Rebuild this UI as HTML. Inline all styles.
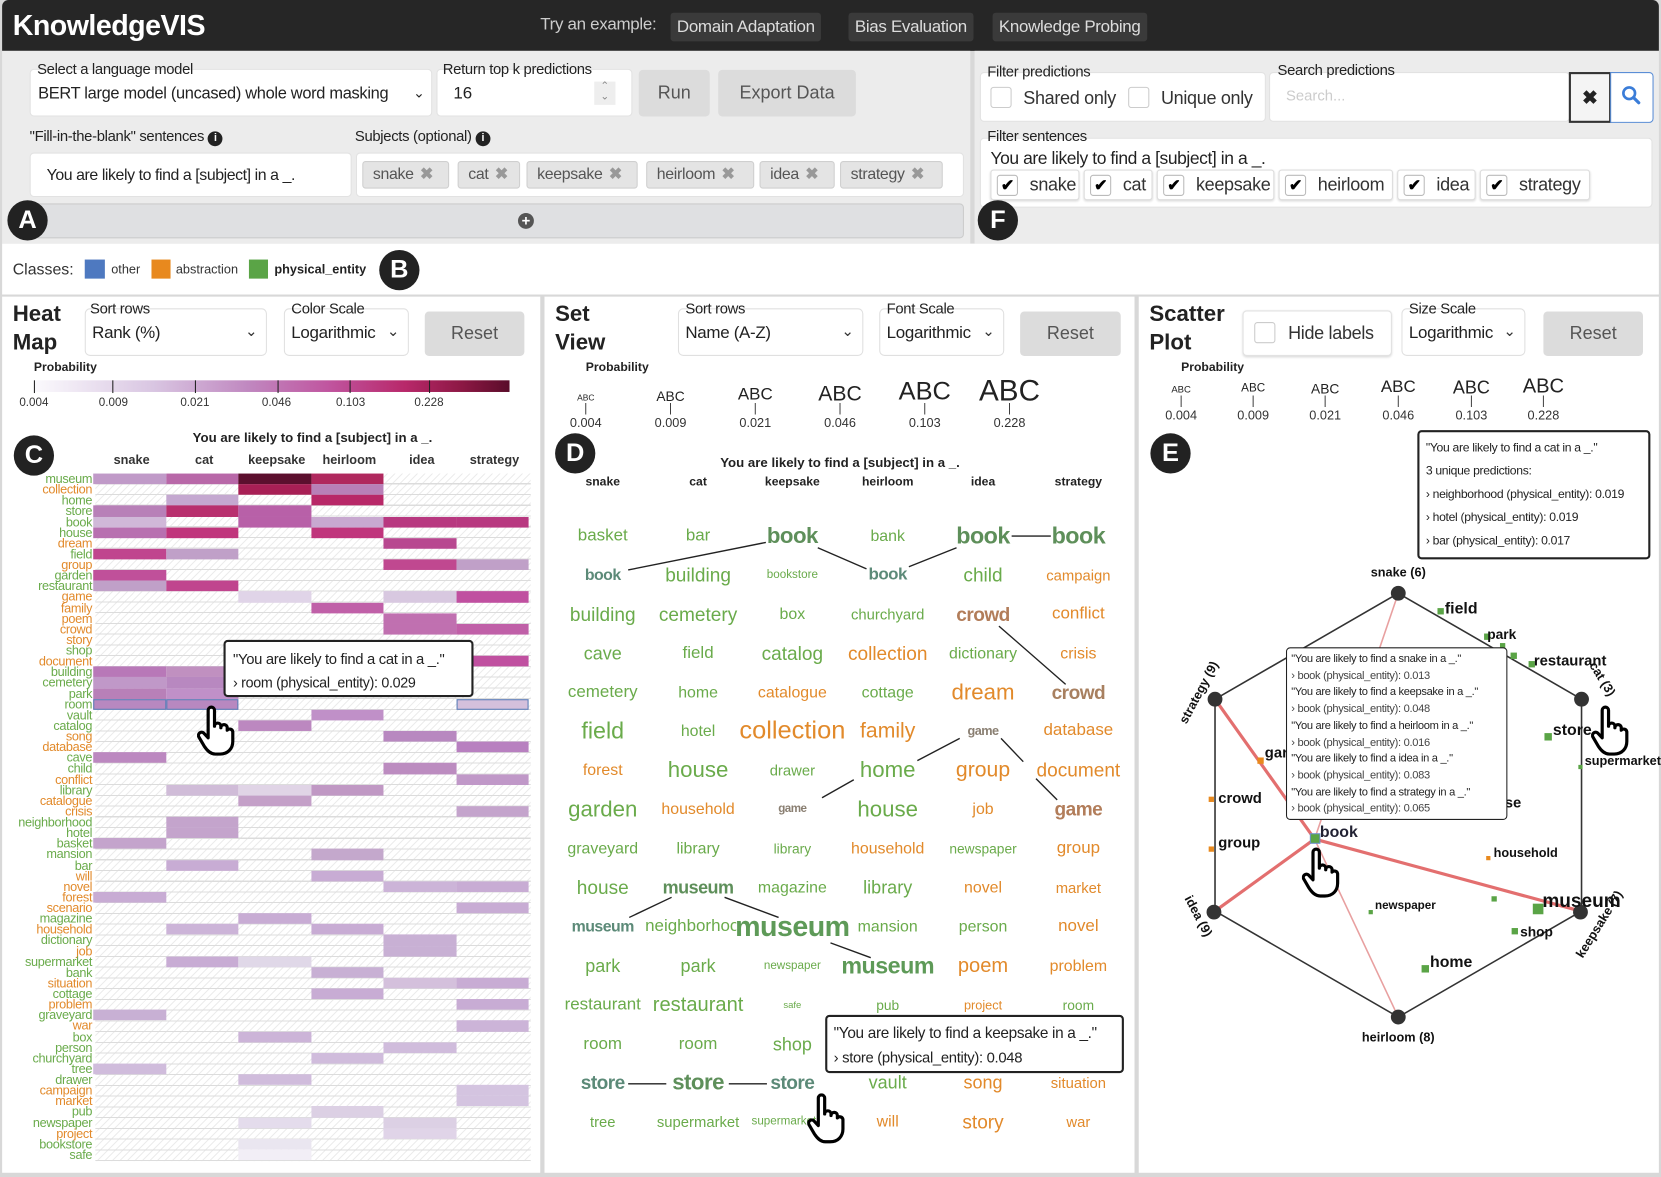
<!DOCTYPE html>
<html><head><meta charset="utf-8">
<style>
*{box-sizing:border-box;margin:0;padding:0}
html,body{width:1661px;height:1177px;overflow:hidden;background:#fff;font-family:"Liberation Sans",sans-serif;color:#222}
#w{position:absolute;left:0;top:0;width:1568px;height:1111px;transform:scale(1.0593,1.0594);transform-origin:0 0;background:#d8d8d8}
.a{position:absolute}
.top{left:2px;top:0;width:1564px;height:48px;background:#262626;border-radius:6px 6px 0 0}
.ex{position:absolute;top:12px;height:27px;background:#3a3a3a;color:#ddd;font-size:16px;line-height:27px;padding:0 6px;border-radius:3px;letter-spacing:-0.3px}
.lbl{position:absolute;font-size:14px;color:#222;letter-spacing:-0.3px}
.box{position:absolute;background:#fff;border:1px solid #e2e2e2;border-radius:4px}
.btn{position:absolute;background:#dcdcdc;color:#555;font-size:17px;text-align:center;border-radius:4px}
.chip{position:absolute;top:152px;height:26px;background:#e4e4e4;border:1px solid #cfcfcf;border-radius:3px;font-size:15px;line-height:24px;color:#555;padding-left:9px;letter-spacing:-0.3px}
.chip i{font-style:normal;color:#999;margin-left:6px;font-weight:bold}
.badge{position:absolute;width:38px;height:38px;border-radius:50%;background:#222;color:#fff;font-weight:bold;font-size:24px;text-align:center;line-height:38px}
.cb{position:absolute;width:20px;height:20px;border:1px solid #ccc;border-radius:3px;background:#fff}
.fchip{position:absolute;top:160px;height:29px;background:#fff;border:1px solid #ddd;border-radius:3px;font-size:17px;line-height:28px;color:#333;box-shadow:0 1px 2px #ddd;letter-spacing:-0.3px}
.fchip b{position:absolute;left:5px;top:4px;width:20px;height:20px;border:1px solid #bbb;border-radius:3px;font-size:15px;line-height:19px;text-align:center;color:#000}
.panel{position:absolute;background:#fff;top:280px;height:827px}
.ptitle{position:absolute;font-weight:bold;font-size:21px;line-height:27px;color:#222}
.sel{position:absolute;background:#fff;border:1px solid #e0e0e0;border-radius:5px}
.sel span{position:absolute;left:6px;top:14px;font-size:16px;color:#222;letter-spacing:-0.3px}
.sel em{position:absolute;right:8px;top:12px;font-style:normal;font-size:14px;color:#333}
.sl{position:absolute;font-size:14px;color:#222;letter-spacing:-0.3px}
.prob{position:absolute;font-weight:bold;font-size:11.5px;color:#222}
.tk{position:absolute;font-size:11px;color:#333;text-align:center;width:50px;margin-left:-25px}
.hm{position:absolute;left:0;top:447px;width:501px}
.r{display:flex;height:10.14px}
.r b{display:block;width:88px;font-weight:normal;font-size:12px;line-height:10px;text-align:right;padding-right:1px;white-space:nowrap;letter-spacing:-0.3px}
.r i{display:block;width:68.5px;height:10.14px}
.g{color:#6aab4b}.o{color:#e28a2b}
.grid{position:absolute;left:90px;top:447px;width:411px;height:649px;background:repeating-linear-gradient(180deg,transparent 0 9.14px,#dcdcdc 9.14px 10.14px),repeating-linear-gradient(-45deg,#fff 0 4px,#ececec 4px 5px)}
.w{position:absolute;transform:translate(-50%,-50%);white-space:nowrap;line-height:1}
.wb{font-weight:bold;letter-spacing:-0.5px}
.tt{position:absolute;background:#fff;border:2px solid #222;border-radius:4px;color:#222;white-space:nowrap;overflow:hidden;letter-spacing:-0.3px}
svg text{font-family:"Liberation Sans",sans-serif}
</style></head><body><div id="w">
<div class="a top"></div>
<div class="a" style="left:12px;top:9px;font-size:27px;font-weight:bold;color:#fff;letter-spacing:-0.5px">KnowledgeVIS</div>
<div class="a" style="left:510px;top:15px;font-size:16px;color:#ccc;letter-spacing:-0.3px">Try an example:</div>
<div class="ex" style="left:633px">Domain Adaptation</div>
<div class="ex" style="left:801px">Bias Evaluation</div>
<div class="ex" style="left:937px">Knowledge Probing</div>
<div class="a" style="left:2px;top:48px;width:914px;height:182px;background:#ececec"></div>
<div class="a" style="left:920px;top:48px;width:646px;height:182px;background:#ececec"></div>
<div class="a" style="left:2px;top:230px;width:1564px;height:48px;background:#fff"></div>
<div class="box" style="left:28px;top:65px;width:380px;height:45px"></div>
<div class="lbl" style="left:35px;top:57px">Select a language model</div>
<div class="a" style="left:36px;top:80px;font-size:15.5px;letter-spacing:-0.3px">BERT large model (uncased) whole word masking</div>
<div class="a" style="left:390px;top:80px;font-size:13px">&#8964;</div>
<div class="box" style="left:412px;top:65px;width:185px;height:45px"></div>
<div class="lbl" style="left:418px;top:57px">Return top k predictions</div>
<div class="a" style="left:428px;top:80px;font-size:16px">16</div>
<div class="a" style="left:561px;top:77px;width:20px;height:22px;background:#eee;font-size:10px;color:#888;text-align:center;line-height:10px">&#8963;<br>&#8964;</div>
<div class="btn" style="left:603px;top:66px;width:67px;height:44px;line-height:44px">Run</div>
<div class="btn" style="left:678px;top:66px;width:130px;height:44px;line-height:44px">Export Data</div>
<div class="lbl" style="left:28px;top:120px">"Fill-in-the-blank" sentences <span style="display:inline-block;width:14px;height:14px;border-radius:50%;background:#222;color:#fff;font-size:10px;text-align:center;line-height:14px;font-weight:bold">i</span></div>
<div class="lbl" style="left:335px;top:120px">Subjects (optional) <span style="display:inline-block;width:14px;height:14px;border-radius:50%;background:#222;color:#fff;font-size:10px;text-align:center;line-height:14px;font-weight:bold">i</span></div>
<div class="box" style="left:28px;top:144px;width:304px;height:42px"></div>
<div class="a" style="left:44px;top:157px;font-size:15px;letter-spacing:-0.4px">You are likely to find a [subject] in a _.</div>
<div class="box" style="left:336px;top:144px;width:574px;height:42px"></div>
<div class="chip" style="left:342px;width:82px">snake<i>✖</i></div>
<div class="chip" style="left:432px;width:59px">cat<i>✖</i></div>
<div class="chip" style="left:497px;width:105px">keepsake<i>✖</i></div>
<div class="chip" style="left:610px;width:102px">heirloom<i>✖</i></div>
<div class="chip" style="left:717px;width:71px">idea<i>✖</i></div>
<div class="chip" style="left:793px;width:97px">strategy<i>✖</i></div>
<div class="a" style="left:30px;top:192px;width:880px;height:33px;background:#dfe0e2;border:1px solid #ccc;border-radius:4px"></div>
<div class="a" style="left:489px;top:201px;width:15px;height:15px;border-radius:50%;background:#555;color:#fff;font-size:14px;line-height:15px;text-align:center;font-weight:bold">+</div>
<div class="badge" style="left:7px;top:189px">A</div>
<div class="box" style="left:925px;top:68px;width:270px;height:47px"></div>
<div class="lbl" style="left:932px;top:59px">Filter predictions</div>
<div class="cb" style="left:935px;top:82px"></div>
<div class="a" style="left:966px;top:83px;font-size:17px;color:#333;letter-spacing:-0.3px">Shared only</div>
<div class="cb" style="left:1065px;top:82px"></div>
<div class="a" style="left:1096px;top:83px;font-size:17px;color:#333;letter-spacing:-0.3px">Unique only</div>
<div class="box" style="left:1198px;top:68px;width:284px;height:47px"></div>
<div class="lbl" style="left:1206px;top:58px">Search predictions</div>
<div class="a" style="left:1214px;top:82px;font-size:14px;color:#ccc">Search...</div>
<div class="a" style="left:1481px;top:68px;width:40px;height:48px;border:2px solid #333;background:#f4f4f4;text-align:center;line-height:44px;font-size:18px;font-weight:bold">✖</div>
<div class="a" style="left:1520px;top:68px;width:41px;height:48px;border:1px solid #5b8ed6;background:#fff;border-radius:0 4px 4px 0"></div>
<svg class="a" style="left:1530px;top:80px" width="20" height="20" viewBox="0 0 20 20"><circle cx="8" cy="8" r="5.5" fill="none" stroke="#3b7dd8" stroke-width="2.5"/><line x1="12" y1="12" x2="17" y2="17" stroke="#3b7dd8" stroke-width="3" stroke-linecap="round"/></svg>
<div class="box" style="left:925px;top:130px;width:635px;height:66px"></div>
<div class="lbl" style="left:932px;top:120px">Filter sentences</div>
<div class="a" style="left:935px;top:141px;font-size:16.5px;color:#222;letter-spacing:-0.4px">You are likely to find a [subject] in a _.</div>
<div class="fchip" style="left:935px;width:84px"><b>✔</b><span style="margin-left:36px">snake</span></div>
<div class="fchip" style="left:1023px;width:65px"><b>✔</b><span style="margin-left:36px">cat</span></div>
<div class="fchip" style="left:1092px;width:111px"><b>✔</b><span style="margin-left:36px">keepsake</span></div>
<div class="fchip" style="left:1207px;width:108px"><b>✔</b><span style="margin-left:36px">heirloom</span></div>
<div class="fchip" style="left:1319px;width:74px"><b>✔</b><span style="margin-left:36px">idea</span></div>
<div class="fchip" style="left:1397px;width:104px"><b>✔</b><span style="margin-left:36px">strategy</span></div>
<div class="badge" style="left:923px;top:189px">F</div>
<div class="a" style="left:12px;top:246px;font-size:15px;color:#333">Classes:</div>
<div class="a" style="left:80px;top:245px;width:19px;height:18px;background:#4e79c0"></div>
<div class="a" style="left:105px;top:247px;font-size:12px;color:#333">other</div>
<div class="a" style="left:143px;top:245px;width:18px;height:18px;background:#e8891e"></div>
<div class="a" style="left:166px;top:247px;font-size:12px;color:#333">abstraction</div>
<div class="a" style="left:235px;top:245px;width:18px;height:18px;background:#5aa446"></div>
<div class="a" style="left:259px;top:247px;font-size:12px;color:#222;font-weight:bold">physical_entity</div>
<div class="badge" style="left:358px;top:236px">B</div>

<div class="panel" style="left:2px;width:508px"></div>
<div class="ptitle" style="left:12px;top:283px">Heat<br>Map</div>
<div class="sel" style="left:80px;top:291px;width:172px;height:45px"><span>Rank (%)</span><em>&#8964;</em></div>
<div class="sl" style="left:85px;top:283px">Sort rows</div>
<div class="sel" style="left:268px;top:291px;width:118px;height:45px"><span>Logarithmic</span><em>&#8964;</em></div>
<div class="sl" style="left:275px;top:283px">Color Scale</div>
<div class="btn" style="left:401px;top:294px;width:94px;height:42px;line-height:42px">Reset</div>
<div class="prob" style="left:32px;top:341px">Probability</div>
<div class="a" style="left:32px;top:359px;width:449px;height:11px;background:linear-gradient(90deg,#fbfafd 0%,#d9c6e2 25%,#c088c0 45%,#c0559f 62%,#b8286a 78%,#8c1844 90%,#5a0c2a 100%)"></div>
<div class="a" style="left:32px;top:359px;width:1px;height:12px;background:#222"></div>
<div class="a" style="left:106px;top:359px;width:1px;height:12px;background:#222"></div>
<div class="a" style="left:184px;top:359px;width:1px;height:12px;background:#222"></div>
<div class="a" style="left:262px;top:359px;width:1px;height:12px;background:#222"></div>
<div class="a" style="left:330px;top:359px;width:1px;height:12px;background:#222"></div>
<div class="a" style="left:405px;top:359px;width:1px;height:12px;background:#222"></div>
<div class="tk" style="left:32px;top:374px">0.004</div><div class="tk" style="left:107px;top:374px">0.009</div><div class="tk" style="left:184px;top:374px">0.021</div><div class="tk" style="left:261px;top:374px">0.046</div><div class="tk" style="left:331px;top:374px">0.103</div><div class="tk" style="left:405px;top:374px">0.228</div>
<div class="badge" style="left:13px;top:411px">C</div>
<div class="a" style="left:120px;top:406px;width:350px;text-align:center;font-size:12.5px;font-weight:bold">You are likely to find a [subject] in a _.</div>
<div class="a" style="left:90px;top:427px;width:411px;display:flex;font-size:12px;font-weight:bold;color:#333"><span style="width:68.5px;text-align:center">snake</span><span style="width:68.5px;text-align:center">cat</span><span style="width:68.5px;text-align:center">keepsake</span><span style="width:68.5px;text-align:center">heirloom</span><span style="width:68.5px;text-align:center">idea</span><span style="width:68.5px;text-align:center">strategy</span></div>
<div class="grid"></div>
<div class="hm">
<div class="r"><b class="g">museum</b><i style="background:#c09ac8"></i><i style="background:#b868a8"></i><i style="background:#5c0f2e"></i><i style="background:#b0285e"></i></div>
<div class="r"><b class="o">collection</b><i></i><i></i><i style="background:#a81f55"></i><i style="background:#b880b8"></i></div>
<div class="r"><b class="g">home</b><i></i><i style="background:#c4a8d0"></i><i></i><i style="background:#b82868"></i></div>
<div class="r"><b class="g">store</b><i style="background:#b880b8"></i><i style="background:#b8306e"></i><i style="background:#b860a8"></i></div>
<div class="r"><b class="g">book</b><i style="background:#d0b8d8"></i><i></i><i style="background:#b860a8"></i><i style="background:#c8a8d0"></i><i style="background:#b83880"></i><i style="background:#b83880"></i></div>
<div class="r"><b class="g">house</b><i style="background:#b870b0"></i><i style="background:#c0357c"></i><i></i><i style="background:#c0357c"></i></div>
<div class="r"><b class="o">dream</b><i></i><i></i><i></i><i></i><i style="background:#b84890"></i></div>
<div class="r"><b class="g">field</b><i style="background:#c0458e"></i><i style="background:#c0a0c8"></i></div>
<div class="r"><b class="o">group</b><i></i><i></i><i></i><i></i><i style="background:#c04890"></i><i style="background:#c0a0c8"></i></div>
<div class="r"><b class="g">garden</b><i style="background:#c0509a"></i></div>
<div class="r"><b class="g">restaurant</b><i style="background:#c0a0c8"></i><i style="background:#c0458e"></i></div>
<div class="r"><b class="o">game</b><i></i><i></i><i style="background:#e0d4e8"></i><i></i><i style="background:#d8c8e0"></i><i style="background:#c050a0"></i></div>
<div class="r"><b class="o">family</b><i></i><i></i><i></i><i style="background:#c060a8"></i></div>
<div class="r"><b class="o">poem</b><i></i><i></i><i></i><i></i><i style="background:#c070b0"></i></div>
<div class="r"><b class="o">crowd</b><i></i><i></i><i></i><i></i><i style="background:#c070b0"></i><i style="background:#c060a8"></i></div>
<div class="r"><b class="o">story</b></div>
<div class="r"><b class="g">shop</b></div>
<div class="r"><b class="o">document</b><i></i><i></i><i></i><i></i><i></i><i style="background:#c050a0"></i></div>
<div class="r"><b class="g">building</b><i style="background:#b878b8"></i><i style="background:#c090c0"></i></div>
<div class="r"><b class="g">cemetery</b><i style="background:#c098c8"></i><i style="background:#b888c0"></i></div>
<div class="r"><b class="g">park</b><i style="background:#b880b8"></i><i style="background:#c090c8"></i></div>
<div class="r"><b class="g">room</b><i style="background:#b888c0;outline:1px solid #5b7fb8;outline-offset:-1px"></i><i style="background:#b888c0;outline:1px solid #5b7fb8;outline-offset:-1px"></i><i></i><i></i><i></i><i style="background:#d4c0dc;outline:1px solid #5b7fb8;outline-offset:-1px"></i></div>
<div class="r"><b class="g">vault</b><i></i><i></i><i></i><i style="background:#c090c8"></i></div>
<div class="r"><b class="g">catalog</b><i></i><i></i><i style="background:#bc88c0"></i></div>
<div class="r"><b class="o">song</b><i></i><i></i><i></i><i></i><i style="background:#b888c0"></i></div>
<div class="r"><b class="o">database</b><i></i><i></i><i></i><i></i><i></i><i style="background:#b880c0"></i></div>
<div class="r"><b class="g">cave</b><i style="background:#bc88c0"></i></div>
<div class="r"><b class="g">child</b><i></i><i></i><i></i><i></i><i style="background:#bc8cc0"></i></div>
<div class="r"><b class="o">conflict</b><i></i><i></i><i></i><i></i><i></i><i style="background:#c098c8"></i></div>
<div class="r"><b class="g">library</b><i></i><i style="background:#d0bcd8"></i><i style="background:#e0d4e6"></i><i style="background:#c098c4"></i></div>
<div class="r"><b class="o">catalogue</b><i></i><i></i><i style="background:#c4a0c8"></i></div>
<div class="r"><b class="o">crisis</b><i></i><i></i><i></i><i></i><i></i><i style="background:#c4a4cc"></i></div>
<div class="r"><b class="g">neighborhood</b><i></i><i style="background:#c4a4cc"></i></div>
<div class="r"><b class="g">hotel</b><i></i><i style="background:#c4a4cc"></i></div>
<div class="r"><b class="g">basket</b><i style="background:#c4a4cc"></i></div>
<div class="r"><b class="g">mansion</b><i></i><i></i><i></i><i style="background:#c4a8cc"></i></div>
<div class="r"><b class="g">bar</b><i></i><i style="background:#c8acd4"></i></div>
<div class="r"><b class="o">will</b><i></i><i></i><i></i><i style="background:#c8acd4"></i></div>
<div class="r"><b class="o">novel</b><i></i><i></i><i></i><i></i><i style="background:#ccb4d8"></i><i style="background:#c8acd4"></i></div>
<div class="r"><b class="o">forest</b><i style="background:#c8acd4"></i></div>
<div class="r"><b class="o">scenario</b><i></i><i></i><i></i><i></i><i></i><i style="background:#c8acd4"></i></div>
<div class="r"><b class="g">magazine</b><i></i><i></i><i style="background:#c8acd4"></i></div>
<div class="r"><b class="o">household</b><i></i><i style="background:#ccb4d8"></i><i></i><i style="background:#c8acd4"></i></div>
<div class="r"><b class="g">dictionary</b><i></i><i></i><i></i><i></i><i style="background:#c8b0d4"></i></div>
<div class="r"><b class="o">job</b><i></i><i></i><i></i><i></i><i style="background:#c8b0d4"></i></div>
<div class="r"><b class="g">supermarket</b><i></i><i style="background:#c8acd4"></i><i style="background:#e0d8e8"></i></div>
<div class="r"><b class="g">bank</b><i></i><i></i><i></i><i style="background:#c8b0d4"></i></div>
<div class="r"><b class="o">situation</b><i></i><i></i><i></i><i></i><i style="background:#d4c0dc"></i><i style="background:#c8acd4"></i></div>
<div class="r"><b class="g">cottage</b><i></i><i></i><i></i><i style="background:#c8acd4"></i></div>
<div class="r"><b class="o">problem</b><i></i><i></i><i></i><i></i><i></i><i style="background:#c8acd4"></i></div>
<div class="r"><b class="g">graveyard</b><i style="background:#c8b0d4"></i></div>
<div class="r"><b class="o">war</b><i></i><i></i><i></i><i></i><i></i><i style="background:#ccb4d8"></i></div>
<div class="r"><b class="g">box</b><i></i><i></i><i style="background:#ccb4d8"></i></div>
<div class="r"><b class="g">person</b><i></i><i></i><i></i><i></i><i style="background:#d0bcdc"></i></div>
<div class="r"><b class="g">churchyard</b><i></i><i></i><i></i><i style="background:#d0bcdc"></i></div>
<div class="r"><b class="g">tree</b><i style="background:#d0bcdc"></i></div>
<div class="r"><b class="g">drawer</b><i></i><i></i><i style="background:#d0bcdc"></i></div>
<div class="r"><b class="o">campaign</b><i></i><i></i><i></i><i></i><i></i><i style="background:#d4c4e0"></i></div>
<div class="r"><b class="o">market</b><i></i><i></i><i></i><i></i><i></i><i style="background:#d4c4e0"></i></div>
<div class="r"><b class="g">pub</b><i></i><i></i><i></i><i style="background:#dcd0e4"></i></div>
<div class="r"><b class="g">newspaper</b><i></i><i></i><i style="background:#e4dcec"></i><i></i><i style="background:#dcd0e4"></i></div>
<div class="r"><b class="o">project</b><i></i><i></i><i></i><i></i><i style="background:#e0d4e8"></i></div>
<div class="r"><b class="g">bookstore</b><i></i><i></i><i style="background:#eae6f0"></i></div>
<div class="r"><b class="g">safe</b><i></i><i></i><i style="background:#f2eef6"></i></div>
</div>
<div class="tt" style="left:211px;top:604px;width:236px;height:54px;padding:5px 0 0 7px;font-size:14px;line-height:22px">"You are likely to find a cat in a _."<br><span style="font-size:13.5px">› room (physical_entity): 0.029</span></div>

<div class="panel" style="left:514px;width:557px"></div>
<div class="ptitle" style="left:524px;top:283px">Set<br>View</div>
<div class="sel" style="left:640px;top:291px;width:175px;height:45px"><span>Name (A-Z)</span><em>&#8964;</em></div>
<div class="sl" style="left:647px;top:283px">Sort rows</div>
<div class="sel" style="left:830px;top:291px;width:118px;height:45px"><span>Logarithmic</span><em>&#8964;</em></div>
<div class="sl" style="left:837px;top:283px">Font Scale</div>
<div class="btn" style="left:963px;top:294px;width:95px;height:42px;line-height:42px">Reset</div>
<div class="prob" style="left:553px;top:341px">Probability</div>
<div class="w" style="left:553px;top:376px;font-size:8px">ABC</div>
<div class="w" style="left:633px;top:374px;font-size:13px">ABC</div>
<div class="w" style="left:713px;top:373px;font-size:16px">ABC</div>
<div class="w" style="left:793px;top:372px;font-size:20px">ABC</div>
<div class="w" style="left:873px;top:370px;font-size:24px">ABC</div>
<div class="w" style="left:953px;top:369px;font-size:28px">ABC</div>
<div class="tk" style="left:553px;top:383px;line-height:6px">|</div><div class="tk" style="left:633px;top:383px;line-height:6px">|</div><div class="tk" style="left:713px;top:383px;line-height:6px">|</div><div class="tk" style="left:793px;top:383px;line-height:6px">|</div><div class="tk" style="left:873px;top:383px;line-height:6px">|</div><div class="tk" style="left:953px;top:383px;line-height:6px">|</div>
<div class="tk" style="left:553px;top:392px;font-size:12px">0.004</div><div class="tk" style="left:633px;top:392px;font-size:12px">0.009</div><div class="tk" style="left:713px;top:392px;font-size:12px">0.021</div><div class="tk" style="left:793px;top:392px;font-size:12px">0.046</div><div class="tk" style="left:873px;top:392px;font-size:12px">0.103</div><div class="tk" style="left:953px;top:392px;font-size:12px">0.228</div>
<div class="badge" style="left:524px;top:409px">D</div>
<div class="w" style="left:793px;top:437px;font-size:12.5px;font-weight:bold">You are likely to find a [subject] in a _.</div>
<div class="w" style="left:569px;top:456px;font-size:11.5px;font-weight:bold">snake</div>
<div class="w" style="left:659px;top:456px;font-size:11.5px;font-weight:bold">cat</div>
<div class="w" style="left:748px;top:456px;font-size:11.5px;font-weight:bold">keepsake</div>
<div class="w" style="left:838px;top:456px;font-size:11.5px;font-weight:bold">heirloom</div>
<div class="w" style="left:928px;top:456px;font-size:11.5px;font-weight:bold">idea</div>
<div class="w" style="left:1018px;top:456px;font-size:11.5px;font-weight:bold">strategy</div>
<svg class="a" style="left:0;top:0" width="1568" height="1111">
<g stroke="#222" stroke-width="1.3">
<line x1="593" y1="538" x2="723" y2="512"/><line x1="772" y1="517" x2="818" y2="537"/><line x1="858" y1="535" x2="903" y2="517"/><line x1="955" y1="506" x2="992" y2="506"/>
<line x1="943" y1="591" x2="1006" y2="646"/><line x1="906" y1="697" x2="866" y2="718"/><line x1="945" y1="697" x2="966" y2="719"/><line x1="978" y1="735" x2="998" y2="755"/>
<line x1="806" y1="736" x2="776" y2="753"/><line x1="634" y1="847" x2="594" y2="866"/><line x1="684" y1="847" x2="735" y2="866"/><line x1="784" y1="890" x2="822" y2="904"/>
<line x1="593" y1="1023" x2="629" y2="1023"/><line x1="688" y1="1023" x2="724" y2="1023"/>
</g></svg>
<div id="sv">
<div class="w g" style="left:569px;top:506px;font-size:16px">basket</div>
<div class="w g" style="left:659px;top:506px;font-size:16px">bar</div>
<div class="w wb" style="left:748px;top:506px;font-size:21px;color:#5e8f5a">book</div>
<div class="w g" style="left:838px;top:506px;font-size:15px">bank</div>
<div class="w wb" style="left:928px;top:506px;font-size:22px;color:#5e8f5a">book</div>
<div class="w wb" style="left:1018px;top:506px;font-size:22px;color:#5e8f5a">book</div>
<div class="w wb" style="left:569px;top:543px;font-size:15px;color:#5c8a78">book</div>
<div class="w g" style="left:659px;top:543px;font-size:18px">building</div>
<div class="w g" style="left:748px;top:543px;font-size:11px">bookstore</div>
<div class="w wb" style="left:838px;top:543px;font-size:16px;color:#5c8a78">book</div>
<div class="w g" style="left:928px;top:543px;font-size:18px">child</div>
<div class="w o" style="left:1018px;top:543px;font-size:14px">campaign</div>
<div class="w g" style="left:569px;top:580px;font-size:18px">building</div>
<div class="w g" style="left:659px;top:580px;font-size:18px">cemetery</div>
<div class="w g" style="left:748px;top:580px;font-size:15px">box</div>
<div class="w g" style="left:838px;top:580px;font-size:14px">churchyard</div>
<div class="w wb" style="left:928px;top:580px;font-size:18px;color:#b27d5a">crowd</div>
<div class="w o" style="left:1018px;top:580px;font-size:16px">conflict</div>
<div class="w g" style="left:569px;top:617px;font-size:17px">cave</div>
<div class="w g" style="left:659px;top:617px;font-size:16px">field</div>
<div class="w g" style="left:748px;top:617px;font-size:18px">catalog</div>
<div class="w o" style="left:838px;top:617px;font-size:18px">collection</div>
<div class="w g" style="left:928px;top:617px;font-size:15px">dictionary</div>
<div class="w o" style="left:1018px;top:617px;font-size:15px">crisis</div>
<div class="w g" style="left:569px;top:654px;font-size:16px">cemetery</div>
<div class="w g" style="left:659px;top:654px;font-size:15px">home</div>
<div class="w o" style="left:748px;top:654px;font-size:15px">catalogue</div>
<div class="w g" style="left:838px;top:654px;font-size:15px">cottage</div>
<div class="w o" style="left:928px;top:654px;font-size:21px">dream</div>
<div class="w wb" style="left:1018px;top:654px;font-size:18px;color:#a88060">crowd</div>
<div class="w g" style="left:569px;top:690px;font-size:22px">field</div>
<div class="w g" style="left:659px;top:690px;font-size:15px">hotel</div>
<div class="w o" style="left:748px;top:690px;font-size:24px">collection</div>
<div class="w o" style="left:838px;top:690px;font-size:20px">family</div>
<div class="w wb" style="left:928px;top:690px;font-size:12px;color:#8a7f72">game</div>
<div class="w o" style="left:1018px;top:690px;font-size:16px">database</div>
<div class="w o" style="left:569px;top:727px;font-size:15px">forest</div>
<div class="w g" style="left:659px;top:727px;font-size:21px">house</div>
<div class="w g" style="left:748px;top:727px;font-size:14px">drawer</div>
<div class="w g" style="left:838px;top:727px;font-size:21px">home</div>
<div class="w o" style="left:928px;top:727px;font-size:20px">group</div>
<div class="w o" style="left:1018px;top:727px;font-size:18px">document</div>
<div class="w g" style="left:569px;top:764px;font-size:21px">garden</div>
<div class="w o" style="left:659px;top:764px;font-size:15px">household</div>
<div class="w wb" style="left:748px;top:764px;font-size:11px;color:#8a7f72">game</div>
<div class="w g" style="left:838px;top:764px;font-size:21px">house</div>
<div class="w o" style="left:928px;top:764px;font-size:15px">job</div>
<div class="w wb" style="left:1018px;top:764px;font-size:18px;color:#b27d5a">game</div>
<div class="w g" style="left:569px;top:801px;font-size:15px">graveyard</div>
<div class="w g" style="left:659px;top:801px;font-size:15px">library</div>
<div class="w g" style="left:748px;top:801px;font-size:13px">library</div>
<div class="w o" style="left:838px;top:801px;font-size:15px">household</div>
<div class="w g" style="left:928px;top:801px;font-size:13px">newspaper</div>
<div class="w o" style="left:1018px;top:801px;font-size:16px">group</div>
<div class="w g" style="left:569px;top:838px;font-size:18px">house</div>
<div class="w wb" style="left:659px;top:838px;font-size:17px;color:#5e8f5a">museum</div>
<div class="w g" style="left:748px;top:838px;font-size:15px">magazine</div>
<div class="w g" style="left:838px;top:838px;font-size:17px">library</div>
<div class="w o" style="left:928px;top:838px;font-size:15px">novel</div>
<div class="w o" style="left:1018px;top:838px;font-size:14px">market</div>
<div class="w wb" style="left:569px;top:875px;font-size:15px;color:#5c8a78">museum</div>
<div class="w g" style="left:652px;top:875px;font-size:16px;width:86px;overflow:hidden;transform:translate(-50%,-50%)">neighborhood</div>
<div class="w wb" style="left:748px;top:875px;font-size:27px;color:#5e9a58">museum</div>
<div class="w g" style="left:838px;top:875px;font-size:15px">mansion</div>
<div class="w g" style="left:928px;top:875px;font-size:15px">person</div>
<div class="w o" style="left:1018px;top:875px;font-size:16px">novel</div>
<div class="w g" style="left:569px;top:912px;font-size:17px">park</div>
<div class="w g" style="left:659px;top:912px;font-size:17px">park</div>
<div class="w g" style="left:748px;top:912px;font-size:11px">newspaper</div>
<div class="w wb" style="left:838px;top:912px;font-size:22px;color:#5e9a58">museum</div>
<div class="w o" style="left:928px;top:912px;font-size:19px">poem</div>
<div class="w o" style="left:1018px;top:912px;font-size:15px">problem</div>
<div class="w g" style="left:569px;top:949px;font-size:16px">restaurant</div>
<div class="w g" style="left:659px;top:949px;font-size:19px">restaurant</div>
<div class="w g" style="left:748px;top:949px;font-size:9px">safe</div>
<div class="w g" style="left:838px;top:949px;font-size:13px">pub</div>
<div class="w o" style="left:928px;top:949px;font-size:12px">project</div>
<div class="w g" style="left:1018px;top:949px;font-size:13px">room</div>
<div class="w g" style="left:569px;top:986px;font-size:16px">room</div>
<div class="w g" style="left:659px;top:986px;font-size:16px">room</div>
<div class="w g" style="left:748px;top:986px;font-size:17px">shop</div>
<div class="w wb" style="left:569px;top:1022px;font-size:18px;color:#5c8a78">store</div>
<div class="w wb" style="left:659px;top:1022px;font-size:21px;color:#5e8f5a">store</div>
<div class="w wb" style="left:748px;top:1022px;font-size:18px;color:#5c8a78">store</div>
<div class="w g" style="left:838px;top:1022px;font-size:17px">vault</div>
<div class="w o" style="left:928px;top:1022px;font-size:17px">song</div>
<div class="w o" style="left:1018px;top:1022px;font-size:14px">situation</div>
<div class="w g" style="left:569px;top:1059px;font-size:14px">tree</div>
<div class="w g" style="left:659px;top:1059px;font-size:14px">supermarket</div>
<div class="w g" style="left:740px;top:1059px;font-size:11px">supermarket</div>
<div class="w o" style="left:838px;top:1059px;font-size:15px">will</div>
<div class="w o" style="left:928px;top:1059px;font-size:18px">story</div>
<div class="w o" style="left:1018px;top:1059px;font-size:14px">war</div>
</div>
<div class="tt" style="left:779px;top:958px;width:282px;height:55px;padding:5px 0 0 6px;font-size:14.5px;line-height:22px">"You are likely to find a keepsake in a _."<br><span style="font-size:14px">› store (physical_entity): 0.048</span></div>

<div class="panel" style="left:1075px;width:491px"></div>
<div class="ptitle" style="left:1085px;top:283px">Scatter<br>Plot</div>
<div class="box" style="left:1173px;top:293px;width:141px;height:43px;box-shadow:0 1px 2px #ddd"></div>
<div class="cb" style="left:1184px;top:304px"></div>
<div class="a" style="left:1216px;top:305px;font-size:17px;color:#333;letter-spacing:-0.3px">Hide labels</div>
<div class="sel" style="left:1323px;top:291px;width:117px;height:45px"><span>Logarithmic</span><em>&#8964;</em></div>
<div class="sl" style="left:1330px;top:283px">Size Scale</div>
<div class="btn" style="left:1457px;top:294px;width:94px;height:42px;line-height:42px">Reset</div>
<div class="prob" style="left:1115px;top:341px">Probability</div>
<div class="w" style="left:1115px;top:368px;font-size:9px">ABC</div>
<div class="w" style="left:1183px;top:367px;font-size:11px">ABC</div>
<div class="w" style="left:1251px;top:367px;font-size:13px">ABC</div>
<div class="w" style="left:1320px;top:366px;font-size:16px">ABC</div>
<div class="w" style="left:1389px;top:366px;font-size:17px">ABC</div>
<div class="w" style="left:1457px;top:365px;font-size:19px">ABC</div>
<div class="tk" style="left:1115px;top:376px;line-height:6px">|</div><div class="tk" style="left:1183px;top:376px;line-height:6px">|</div><div class="tk" style="left:1251px;top:376px;line-height:6px">|</div><div class="tk" style="left:1320px;top:376px;line-height:6px">|</div><div class="tk" style="left:1389px;top:376px;line-height:6px">|</div><div class="tk" style="left:1457px;top:376px;line-height:6px">|</div>
<div class="tk" style="left:1115px;top:385px;font-size:12px">0.004</div><div class="tk" style="left:1183px;top:385px;font-size:12px">0.009</div><div class="tk" style="left:1251px;top:385px;font-size:12px">0.021</div><div class="tk" style="left:1320px;top:385px;font-size:12px">0.046</div><div class="tk" style="left:1389px;top:385px;font-size:12px">0.103</div><div class="tk" style="left:1457px;top:385px;font-size:12px">0.228</div>
<div class="badge" style="left:1086px;top:409px">E</div>
<svg class="a" style="left:0;top:0" width="1568" height="1111">
<g stroke="#e8a0a0" stroke-width="1.5"><line x1="1320" y1="560" x2="1241" y2="792"/><line x1="1320" y1="960" x2="1241" y2="792"/></g>
<g stroke="#e06060" stroke-width="3" opacity="0.9"><line x1="1147" y1="660" x2="1241" y2="792"/><line x1="1147" y1="860" x2="1241" y2="792"/><line x1="1241" y1="792" x2="1492" y2="860"/></g>
<g stroke="#333" stroke-width="1.5" fill="none"><polygon points="1320,560 1493,660 1493,860 1320,960 1147,860 1147,660"/></g>
<g fill="#333"><circle cx="1320" cy="560" r="7"/><circle cx="1493" cy="660" r="7"/><circle cx="1492" cy="861" r="7"/><circle cx="1320" cy="960" r="7"/><circle cx="1146" cy="861" r="7"/><circle cx="1147" cy="660" r="7"/></g>
<g fill="#5aa446"><rect x="1357" y="574" width="6" height="6"/><rect x="1401" y="598" width="6" height="6"/><rect x="1416" y="607" width="5" height="5"/><rect x="1426" y="616" width="6" height="6"/><rect x="1443" y="624" width="6" height="6"/><rect x="1458" y="692" width="7" height="7"/><rect x="1490" y="722" width="4" height="4"/><rect x="1408" y="846" width="5" height="5"/><rect x="1447" y="853" width="10" height="10"/><rect x="1427" y="876" width="6" height="6"/><rect x="1342" y="911" width="7" height="7"/><rect x="1292" y="859" width="4" height="4"/><rect x="1237" y="787" width="9" height="9" stroke="#6a8fc8" stroke-width="1"/></g>
<g fill="#e8891e"><rect x="1187" y="715" width="6" height="6"/><rect x="1141" y="752" width="5" height="5"/><rect x="1141" y="799" width="5" height="5"/><rect x="1403" y="808" width="4" height="4"/></g>
<g font-weight="bold" fill="#111">
<text x="1320" y="544" font-size="12" text-anchor="middle">snake (6)</text>
<text x="1320" y="983" font-size="12" text-anchor="middle">heirloom (8)</text>
<text x="0" y="0" font-size="12" transform="translate(1120,684) rotate(-62)">strategy (9)</text>
<text x="0" y="0" font-size="12" transform="translate(1500,628) rotate(58)">cat (3)</text>
<text x="0" y="0" font-size="12" transform="translate(1118,848) rotate(62)">idea (9)</text>
<text x="0" y="0" font-size="12" transform="translate(1494,905) rotate(-58)">keepsake (7)</text>
<text x="1364" y="579" font-size="15">field</text>
<text x="1404" y="603" font-size="13">park</text>
<text x="1448" y="628" font-size="14">restaurant</text>
<text x="1466" y="694" font-size="15">store</text>
<text x="1496" y="722" font-size="12">supermarket</text>
<text x="1150" y="758" font-size="14">crowd</text>
<text x="1150" y="800" font-size="14">group</text>
<text x="1194" y="715" font-size="14">gar</text>
<text x="1412" y="762" font-size="14">use</text>
<text x="1246" y="790" font-size="15" fill="#223">book</text>
<text x="1410" y="809" font-size="12">household</text>
<text x="1298" y="858" font-size="11">newspaper</text>
<text x="1456" y="856" font-size="18">museum</text>
<text x="1435" y="884" font-size="13">shop</text>
<text x="1350" y="913" font-size="15">home</text>
</g></svg>
<div class="tt" style="left:1338px;top:406px;width:220px;height:122px;padding:4px 0 0 6px;font-size:11.5px;line-height:22px">"You are likely to find a cat in a _."<br>3 unique predictions:<br>› neighborhood (physical_entity): 0.019<br>› hotel (physical_entity): 0.019<br>› bar (physical_entity): 0.017</div>
<div class="tt" style="left:1214px;top:611px;width:209px;height:163px;border-width:1.5px;padding:3px 0 0 4px;font-size:10.5px;line-height:15.7px">"You are likely to find a snake in a _."<br><span style="color:#444">› book (physical_entity): 0.013</span><br>"You are likely to find a keepsake in a _."<br><span style="color:#444">› book (physical_entity): 0.048</span><br>"You are likely to find a heirloom in a _."<br><span style="color:#444">› book (physical_entity): 0.016</span><br>"You are likely to find a idea in a _."<br><span style="color:#444">› book (physical_entity): 0.083</span><br>"You are likely to find a strategy in a _."<br><span style="color:#444">› book (physical_entity): 0.065</span></div>

<svg class="a" style="left:186px;top:666px" width="36" height="48" viewBox="0 0 24 32"><path d="M7 3a2 2 0 0 1 4 0v10a2 2 0 0 1 4 0v1a2 2 0 0 1 4 0v1.5a2 2 0 0 1 3.5 1v6c0 4.5-3 8-8 8h-3c-3 0-5-2-7-5l-3.5-6a2 2 0 0 1 3.2-2.2l2.8 3z" fill="#fff" stroke="#000" stroke-width="2" stroke-linejoin="round"/></svg>
<svg class="a" style="left:762px;top:1032px" width="36" height="48" viewBox="0 0 24 32"><path d="M7 3a2 2 0 0 1 4 0v10a2 2 0 0 1 4 0v1a2 2 0 0 1 4 0v1.5a2 2 0 0 1 3.5 1v6c0 4.5-3 8-8 8h-3c-3 0-5-2-7-5l-3.5-6a2 2 0 0 1 3.2-2.2l2.8 3z" fill="#fff" stroke="#000" stroke-width="2" stroke-linejoin="round"/></svg>
<svg class="a" style="left:1229px;top:800px" width="36" height="48" viewBox="0 0 24 32"><path d="M7 3a2 2 0 0 1 4 0v10a2 2 0 0 1 4 0v1a2 2 0 0 1 4 0v1.5a2 2 0 0 1 3.5 1v6c0 4.5-3 8-8 8h-3c-3 0-5-2-7-5l-3.5-6a2 2 0 0 1 3.2-2.2l2.8 3z" fill="#fff" stroke="#000" stroke-width="2" stroke-linejoin="round"/></svg>
<svg class="a" style="left:1502px;top:666px" width="36" height="48" viewBox="0 0 24 32"><path d="M7 3a2 2 0 0 1 4 0v10a2 2 0 0 1 4 0v1a2 2 0 0 1 4 0v1.5a2 2 0 0 1 3.5 1v6c0 4.5-3 8-8 8h-3c-3 0-5-2-7-5l-3.5-6a2 2 0 0 1 3.2-2.2l2.8 3z" fill="#fff" stroke="#000" stroke-width="2" stroke-linejoin="round"/></svg>
</div></body></html>
